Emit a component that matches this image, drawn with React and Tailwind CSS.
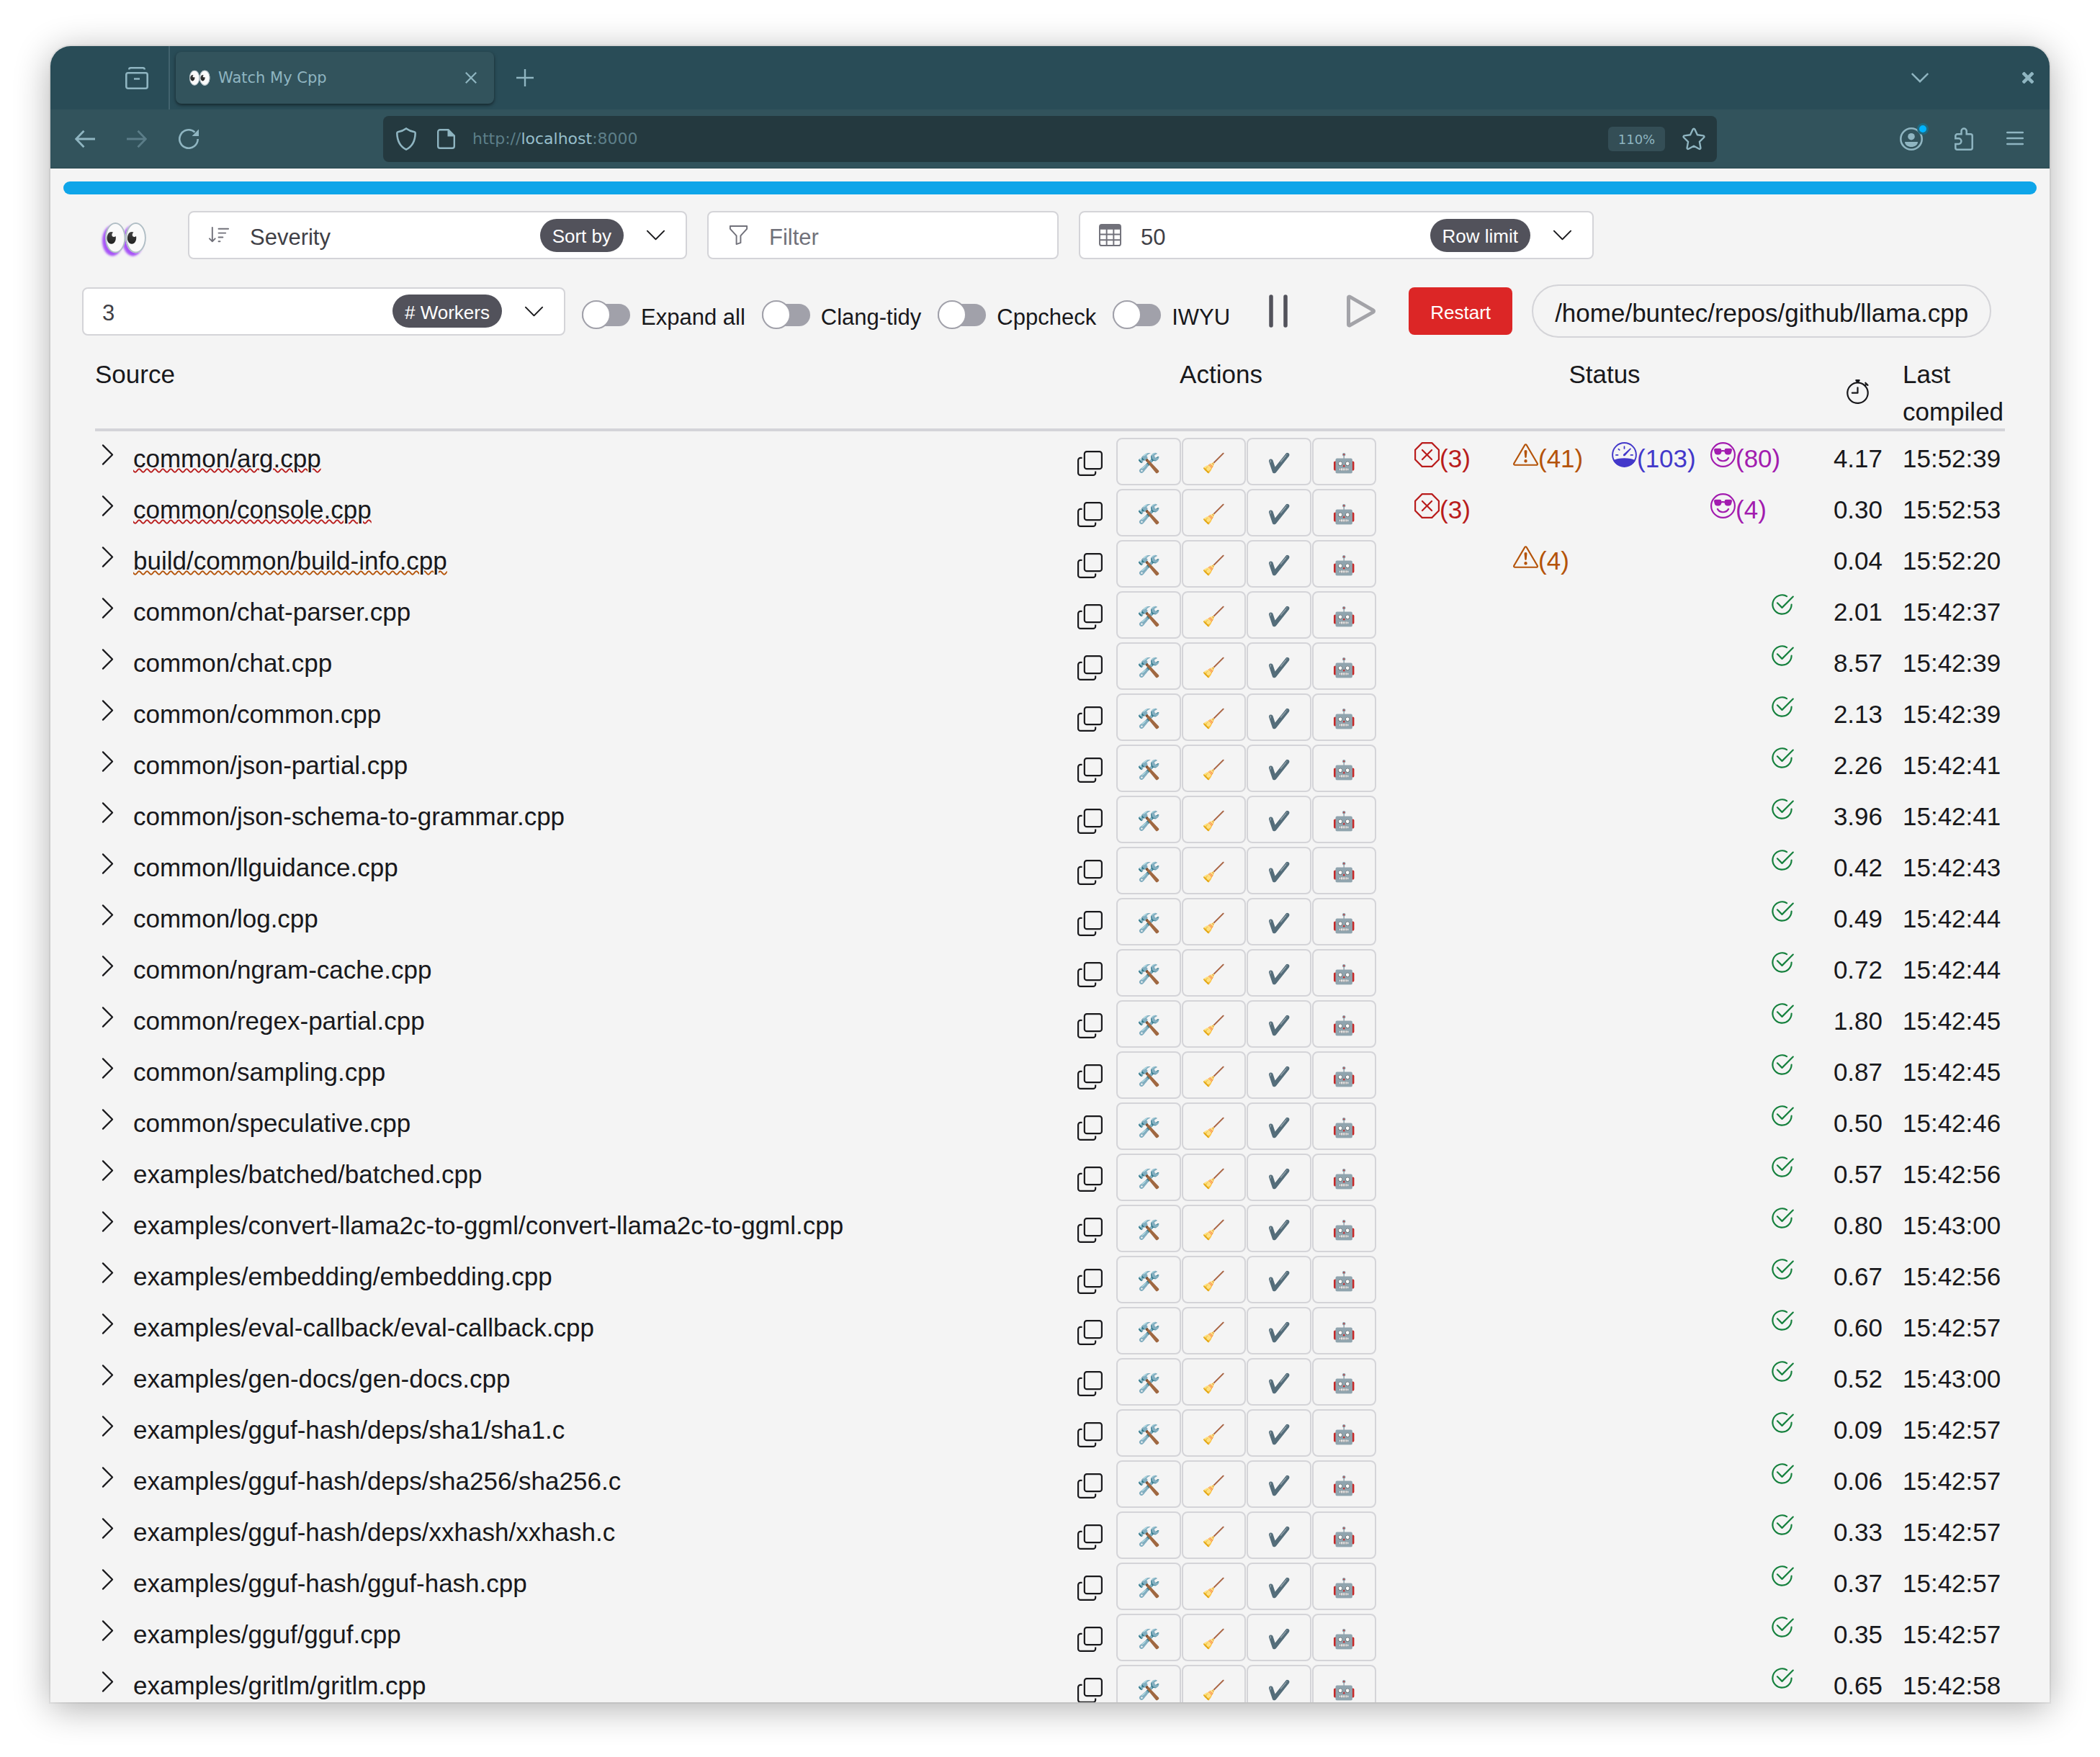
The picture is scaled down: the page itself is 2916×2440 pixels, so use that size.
import {
  BsCheck2Circle,
  BsChevronDown,
  BsChevronRight,
  BsCopy,
  BsEmojiSunglasses,
  BsExclamationTriangle,
  BsFunnel,
  BsSortDown,
  BsStopwatch,
  BsTable,
  BsXOctagon,
} from "react-icons/bs";

const files = [
  { name: "common/arg.cpp", time: "4.17", last: "15:52:39", errors: 3, warnings: 41, perf: 103, style: 80 },
  { name: "common/console.cpp", time: "0.30", last: "15:52:53", errors: 3, style: 4 },
  { name: "build/common/build-info.cpp", time: "0.04", last: "15:52:20", warnings: 4 },
  { name: "common/chat-parser.cpp", time: "2.01", last: "15:42:37" },
  { name: "common/chat.cpp", time: "8.57", last: "15:42:39" },
  { name: "common/common.cpp", time: "2.13", last: "15:42:39" },
  { name: "common/json-partial.cpp", time: "2.26", last: "15:42:41" },
  { name: "common/json-schema-to-grammar.cpp", time: "3.96", last: "15:42:41" },
  { name: "common/llguidance.cpp", time: "0.42", last: "15:42:43" },
  { name: "common/log.cpp", time: "0.49", last: "15:42:44" },
  { name: "common/ngram-cache.cpp", time: "0.72", last: "15:42:44" },
  { name: "common/regex-partial.cpp", time: "1.80", last: "15:42:45" },
  { name: "common/sampling.cpp", time: "0.87", last: "15:42:45" },
  { name: "common/speculative.cpp", time: "0.50", last: "15:42:46" },
  { name: "examples/batched/batched.cpp", time: "0.57", last: "15:42:56" },
  { name: "examples/convert-llama2c-to-ggml/convert-llama2c-to-ggml.cpp", time: "0.80", last: "15:43:00" },
  { name: "examples/embedding/embedding.cpp", time: "0.67", last: "15:42:56" },
  { name: "examples/eval-callback/eval-callback.cpp", time: "0.60", last: "15:42:57" },
  { name: "examples/gen-docs/gen-docs.cpp", time: "0.52", last: "15:43:00" },
  { name: "examples/gguf-hash/deps/sha1/sha1.c", time: "0.09", last: "15:42:57" },
  { name: "examples/gguf-hash/deps/sha256/sha256.c", time: "0.06", last: "15:42:57" },
  { name: "examples/gguf-hash/deps/xxhash/xxhash.c", time: "0.33", last: "15:42:57" },
  { name: "examples/gguf-hash/gguf-hash.cpp", time: "0.37", last: "15:42:57" },
  { name: "examples/gguf/gguf.cpp", time: "0.35", last: "15:42:57" },
  { name: "examples/gritlm/gritlm.cpp", time: "0.65", last: "15:42:58" },
];

const actions = [
  { label: "Compile", glyph: "🛠️" },
  { label: "Clang-tidy", glyph: "🧹" },
  { label: "Cppcheck", glyph: "✔️" },
  { label: "IWYU", glyph: "🤖" },
];

/* ---------- browser frame ---------- */

function Stroke({ className, viewBox, width = 3, children }) {
  return (
    <svg className={className} viewBox={viewBox} fill="none" stroke="currentColor" strokeWidth={width} aria-hidden="true">
      {children}
    </svg>
  );
}

function TitleBar() {
  return (
    <div className="flex h-[88px] items-center bg-[#294c57] pr-[22px] pl-[104px]">
      <button aria-label="Recent browsing">
        <Stroke className="h-8 w-8" viewBox="0 0 32 32" width={2.6}>
          <path d="M5.3 4.5C5.3 2.8 6 2.3 7.5 2.3h17c1.500 0 2.200.5 2.200 2.200" />
          <rect x="1.300" y="9.300" width="29.400" height="21.400" rx="2.500" />
          <path d="M12 17.500h8" />
        </Stroke>
      </button>
      <div className="ml-7 w-[2px] self-stretch bg-[#42636e]" />
      <div className="ml-2 flex h-[72px] w-[442px] items-center rounded-lg bg-[#32535c] pr-6 pl-[17px] shadow-[0_2px_4px_rgba(0,0,0,0.5)]">
        <span className="w-[34px] shrink-0 text-[26px] leading-8 whitespace-nowrap">👀</span>
        <span className="ml-2 flex-1 font-['DejaVu_Sans',sans-serif] text-[21px] leading-8">Watch My Cpp</span>
        <button aria-label="Close tab">
          <Stroke className="h-4 w-4" viewBox="0 0 16 16" width={2.2}>
            <path d="M.8.8l14.400 14.400M15.200.8L.8 15.200" />
          </Stroke>
        </button>
      </div>
      <button className="ml-[31px]" aria-label="New tab">
        <Stroke className="h-6 w-6" viewBox="0 0 24 24" width={2.4}>
          <path d="M12 0v24M0 12h24" />
        </Stroke>
      </button>
      <button className="ml-auto" aria-label="List all tabs">
        <Stroke className="h-6 w-6" viewBox="0 0 24 24" width={2.4}>
          <path d="M.8 6l11.200 11.200L23.200 6" />
        </Stroke>
      </button>
      <button className="ml-[130px]" aria-label="Close window">
        <Stroke className="h-4 w-4" viewBox="0 0 16 16" width={4.6}>
          <path d="M1 1l14 14M15 1L1 15" />
        </Stroke>
      </button>
    </div>
  );
}

function ToolBar() {
  return (
    <div className="flex h-[82px] items-center border-b border-[#28464f] bg-[#32535c] pt-px pr-9 pl-[34px]">
      <div className="flex items-center gap-11">
        <button aria-label="Back">
          <Stroke className="h-7 w-7" viewBox="0 0 28 28" width={2.8}>
            <path d="M28 14H2M12.500 2.800L1.600 14l10.900 11.200" />
          </Stroke>
        </button>
        <button className="text-[#5b7d88]" aria-label="Forward" disabled>
          <Stroke className="h-7 w-7" viewBox="0 0 28 28" width={2.8}>
            <path d="M0 14h26M15.500 2.800L26.400 14 15.500 25.200" />
          </Stroke>
        </button>
        <button aria-label="Reload">
          <Stroke className="h-7 w-7" viewBox="0 0 28 28" width={2.6}>
            <path d="M26.700 14A12.700 12.700 0 1 1 22.500 4.600" />
            <path d="M28 .6V10H18.600z" fill="currentColor" stroke="none" />
          </Stroke>
        </button>
      </div>
      <div className="ml-64 flex h-16 flex-1 items-center rounded-lg bg-[#24393f] pr-4 pl-[18px]">
        <button aria-label="Tracking protection">
          <Stroke className="h-8 w-7" viewBox="0 0 28 32" width={2.6}>
            <path d="M14 1.500C10.500 4.200 6 5.600 2.500 6.200 1.600 6.400 1.300 7 1.300 8c.3 10.500 4.200 18.500 12.700 22.600C22.500 26.500 26.400 18.500 26.700 8c0-1-.3-1.600-1.200-1.800C22 5.600 17.500 4.200 14 1.500z" />
          </Stroke>
        </button>
        <button className="ml-[29px]" aria-label="Site information">
          <Stroke className="h-7 w-[25px]" viewBox="0 0 25 28" width={2.4}>
            <path d="M4 1.200h11.500L23.800 9.500V24a2.800 2.800 0 0 1-2.800 2.800H4A2.800 2.800 0 0 1 1.200 24V4A2.800 2.800 0 0 1 4 1.200z" />
            <path d="M14.500 1v9.500H24z" fill="currentColor" stroke="none" />
          </Stroke>
        </button>
        <div className="ml-6 flex-1 font-['DejaVu_Sans',sans-serif] text-[22px] leading-8 text-[#5d7f89]">
          http://<span className="text-[#97bfcb]">localhost</span>:8000
        </div>
        <button className="h-[34px] w-[79px] rounded-md bg-[#344e56] font-['DejaVu_Sans',sans-serif] text-[18px]">110%</button>
        <button className="ml-6" aria-label="Bookmark this page">
          <Stroke className="h-8 w-8" viewBox="0 0 32 32" width={2.4}>
            <path strokeLinejoin="round" d="M14.700 2.600c.6-1.200 2-1.200 2.600 0l3.600 7.700 8.100 1.100c1.400.2 1.900 1.600.9 2.600l-6 5.800 1.500 8.400c.2 1.300-1 2.100-2.100 1.500L16 25.700l-7.300 4c-1.100.6-2.300-.2-2.100-1.500l1.500-8.400-6-5.800c-1-1-.5-2.400.9-2.600l8.100-1.100z" />
          </Stroke>
        </button>
      </div>
      <button className="relative ml-[254px]" aria-label="Account">
        <Stroke className="h-8 w-8" viewBox="0 0 32 32" width={2.6}>
          <circle cx="16" cy="16" r="14.700" />
          <circle cx="16" cy="12.700" r="4.800" fill="currentColor" stroke="none" />
          <path d="M7 20h18c0 4.500-4.500 7-9 7s-9-2.500-9-7z" fill="currentColor" stroke="none" />
        </Stroke>
        <span className="absolute -top-1.5 -right-2 h-4 w-4 rounded-full border-[3px] border-[#20697f] bg-[#00b3ff]" />
      </button>
      <button className="ml-11" aria-label="Extensions">
        <Stroke className="h-8 w-[26px]" viewBox="0 0 26 32" width={2.500}>
          <path d="M9.500 9.300V5.100a3.600 3.600 0 0 1 7.200 0v4.200h5.500a2.500 2.500 0 0 1 2.500 2.500v16.400a2.500 2.500 0 0 1-2.500 2.500H3.800a2.500 2.500 0 0 1-2.500-2.500v-5.300h4.300a3.800 3.800 0 0 0 0-7.600H1.300v-3.500a2.500 2.500 0 0 1 2.500-2.500z" />
        </Stroke>
      </button>
      <button className="ml-[46px]" aria-label="Menu">
        <Stroke className="h-6 w-6" viewBox="0 0 24 24" width={2.500}>
          <path strokeLinecap="round" d="M1.200 3h21.600M1.200 11h21.600M1.200 19h21.600" />
        </Stroke>
      </button>
    </div>
  );
}

/* ---------- controls ---------- */

function SelectBox({ id, icon, value, tag, className }) {
  return (
    <div className={"flex h-[67px] items-center rounded-lg border-2 border-[#d4d4d8] bg-white px-[26px] " + className}>
      {icon && <span className="mr-[27px] text-[31px] text-[#71717a]">{icon}</span>}
      <select id={id} defaultValue={value} className="min-w-0 flex-1 appearance-none bg-transparent pt-1.5 text-[31px] leading-10 text-[#3f3f46] outline-none">
        <option>{value}</option>
      </select>
      <label htmlFor={id} className="mr-[29px] flex h-[46px] items-center rounded-full bg-[#52525b] px-[17px] pt-1 text-[26px] whitespace-nowrap text-white">
        {tag}
      </label>
      <BsChevronDown className="shrink-0 text-[31px]" aria-hidden="true" />
    </div>
  );
}

function Toggle({ label }) {
  return (
    <label className="flex items-center gap-[15px] text-[31px] leading-10 whitespace-nowrap">
      <input
        type="checkbox"
        role="switch"
        className="flex h-[31px] w-[67px] shrink-0 appearance-none items-center rounded-full bg-[#a1a1aa] before:h-10 before:w-10 before:shrink-0 before:rounded-full before:border-2 before:border-[#a1a1aa] before:bg-white before:content-['']"
      />
      <span className="pt-2">{label}</span>
    </label>
  );
}

function Controls() {
  return (
    <div className="px-[26px]">
      <div className="mt-[23px] flex items-center gap-7">
        <h1 className="w-[119px] pt-2 pl-7 text-[52px] leading-[59px] whitespace-nowrap">
          <span className="[text-shadow:-4px_4px_3px_#a855f7]">👀</span>
        </h1>
        <SelectBox id="sort" icon={<BsSortDown />} value="Severity" tag="Sort by" className="w-[693px]" />
        <div className="flex h-[67px] w-[488px] items-center rounded-lg border-2 border-[#d4d4d8] bg-white px-[26px]">
          <BsFunnel className="mr-[27px] shrink-0 text-[31px] text-[#71717a]" aria-hidden="true" />
          <input aria-label="Filter" placeholder="Filter" className="min-w-0 flex-1 bg-transparent pt-1.5 text-[31px] leading-10 outline-none placeholder:text-[#71717a]" />
        </div>
        <SelectBox id="limit" icon={<BsTable />} value="50" tag="Row limit" className="w-[715px]" />
      </div>
      <div className="mt-[35px] flex items-center">
        <SelectBox id="workers" value="3" tag="# Workers" className="w-[671px]" />
        <div className="mt-2.5 ml-[23px] flex gap-[23px]">
          <Toggle label="Expand all" />
          <Toggle label="Clang-tidy" />
          <Toggle label="Cppcheck" />
          <Toggle label="IWYU" />
        </div>
        <div className="ml-[18px] flex items-center gap-[17px]">
          <button className="px-4 text-[#52525b]" aria-label="Pause">
            <Stroke className="h-[66px] w-[66px]" viewBox="0 0 66 66" width={5.500}>
              <path strokeLinecap="round" d="M23 13v40M43 13v40" />
            </Stroke>
          </button>
          <button className="px-4 text-[#a3a3a8]" aria-label="Play" disabled>
            <Stroke className="h-[66px] w-[66px]" viewBox="0 0 66 66" width={5}>
              <path strokeLinejoin="round" d="M15.500 14.200v37.600c0 1 .9 1.500 1.800 1l32.500-18.400c1-.6 1-2 0-2.600L17.300 13.200c-.9-.5-1.800 0-1.800 1z" />
            </Stroke>
          </button>
          <button className="h-[66px] w-[144px] rounded-lg bg-[#dc2626] pt-1 text-[26px] text-white">Restart</button>
        </div>
        <div className="ml-[27px] flex h-[74px] items-center rounded-full border-2 border-[#d4d4d8] px-[30px] pt-1.5 text-[35px] whitespace-nowrap">
          /home/buntec/repos/github/llama.cpp
        </div>
      </div>
    </div>
  );
}

/* ---------- table ---------- */

function Gauge() {
  return (
    <svg viewBox="0 0 16 16" width="1em" height="1em" fill="none" stroke="currentColor" strokeLinecap="round" aria-hidden="true">
      <circle cx="8" cy="8" r="7.500" strokeWidth=".9" />
      <path d="M8 2.800v1.300M4.300 4.400l.6.6M2.700 8.200h1.200M12.100 8.200h1.200" strokeWidth=".8" />
      <path d="M11.700 3.900c.3-.2.700.2.500.5L8.500 8.600c-.7.700-1.700-.3-1-1z" fill="currentColor" stroke="none" />
      <path d="M1 11.700C2.500 10.700 5 10.200 8 10.200s5.500.5 7 1.500C13.800 14.100 11.200 15.500 8 15.500S2.200 14.100 1 11.700z" fill="currentColor" stroke="none" />
    </svg>
  );
}

function Count({ icon, value, className }) {
  return (
    <span className={"flex items-start pt-2.5 whitespace-nowrap " + className}>
      {value && (
        <>
          {icon}
          <span className="leading-[46px]">({value})</span>
        </>
      )}
    </span>
  );
}

function Status({ file }) {
  if (!file.errors && !file.warnings && !file.perf && !file.style) {
    return <BsCheck2Circle className="mt-[5px] ml-auto text-[#15803d]" title="OK" />;
  }
  return (
    <div className="grid grid-cols-4 gap-5">
      <Count icon={<BsXOctagon />} value={file.errors} className="text-[#b91c1c]" />
      <Count icon={<BsExclamationTriangle />} value={file.warnings} className="text-[#b45309]" />
      <Count icon={<Gauge />} value={file.perf} className="text-[#4338ca]" />
      <Count icon={<BsEmojiSunglasses />} value={file.style} className="text-[#a21caf]" />
    </div>
  );
}

function nameStyle(file) {
  if (file.errors) return "underline decoration-wavy decoration-2 decoration-[#b91c1c]";
  if (file.warnings) return "underline decoration-wavy decoration-2 decoration-[#b45309]";
  return "";
}

function FileRow({ file }) {
  return (
    <tr className="h-[71px] align-top leading-[66px]">
      <td className="p-0">
        <div className="flex items-start gap-[18px]">
          <button className="pt-2.5" aria-label={"Expand " + file.name}>
            <BsChevronRight />
          </button>
          <span className={nameStyle(file)}>{file.name}</span>
        </div>
      </td>
      <td className="p-0 pr-[53px]">
        <div className="flex pt-1">
          <button className="mr-[3px] flex h-[66px] items-center px-4 pt-1" aria-label="Copy command">
            <BsCopy />
          </button>
          <div className="flex flex-1 gap-px">
            {actions.map((a) => (
              <button key={a.label} aria-label={a.label} className="flex h-[66px] flex-1 items-center justify-center rounded-lg border-2 border-[#d4d4d8] pt-1 text-[26px] leading-8">
                {a.glyph}
              </button>
            ))}
          </div>
        </div>
      </td>
      <td className="p-0 pr-[52px]">
        <Status file={file} />
      </td>
      <td className="p-0 pr-7 text-right">{file.time}</td>
      <td className="p-0">{file.last}</td>
    </tr>
  );
}

function FileTable() {
  return (
    <table className="w-full table-fixed border-separate border-spacing-0 text-[35px]">
      <colgroup>
        <col />
        <col className="w-[484px]" />
        <col className="w-[580px]" />
        <col className="w-[98px]" />
        <col className="w-[142px]" />
      </colgroup>
      <thead>
        <tr className="text-left leading-[52px]">
          <th className="p-0 pb-[5px] font-normal">
            <div className="h-[105px] border-b-4 border-[#d4d4d8]">Source</div>
          </th>
          <th className="p-0 pb-[5px] font-normal">
            <div className="h-[105px] border-b-4 border-[#d4d4d8] pr-[53px] text-center">Actions</div>
          </th>
          <th className="p-0 pb-[5px] font-normal">
            <div className="h-[105px] border-b-4 border-[#d4d4d8] pr-[52px] text-center">Status</div>
          </th>
          <th className="p-0 pb-[5px] font-normal">
            <div className="flex h-[105px] justify-center border-b-4 border-[#d4d4d8] pt-8 pr-7">
              <BsStopwatch title="Compile time" />
            </div>
          </th>
          <th className="p-0 pb-[5px] font-normal">
            <div className="h-[105px] border-b-4 border-[#d4d4d8]">Last compiled</div>
          </th>
        </tr>
      </thead>
      <tbody>
        {files.map((f) => (
          <FileRow key={f.name} file={f} />
        ))}
      </tbody>
    </table>
  );
}

export default function App() {
  return (
    <div className="h-screen overflow-hidden bg-white px-[70px] pt-16 pb-[76px] font-['Liberation_Sans',Arial,sans-serif]">
      <div className="flex h-full flex-col overflow-hidden rounded-t-[28px] bg-[#f4f4f4] shadow-[0_0_0_2px_rgba(0,0,0,0.05),0_8px_50px_rgba(0,0,0,0.32)]">
        <header className="shrink-0 text-[#8fb5c1]">
          <TitleBar />
          <ToolBar />
        </header>
        <main className="min-h-0 flex-1 overflow-hidden text-[#18181b]">
          <div className="px-[18px] pt-[18px]">
            <div role="progressbar" aria-label="Progress" aria-valuenow={100} className="h-[18px] rounded-full bg-[#0ea5e9]" />
            <Controls />
          </div>
          <div className="mt-[25px] px-[62px]">
            <FileTable />
          </div>
        </main>
      </div>
    </div>
  );
}
